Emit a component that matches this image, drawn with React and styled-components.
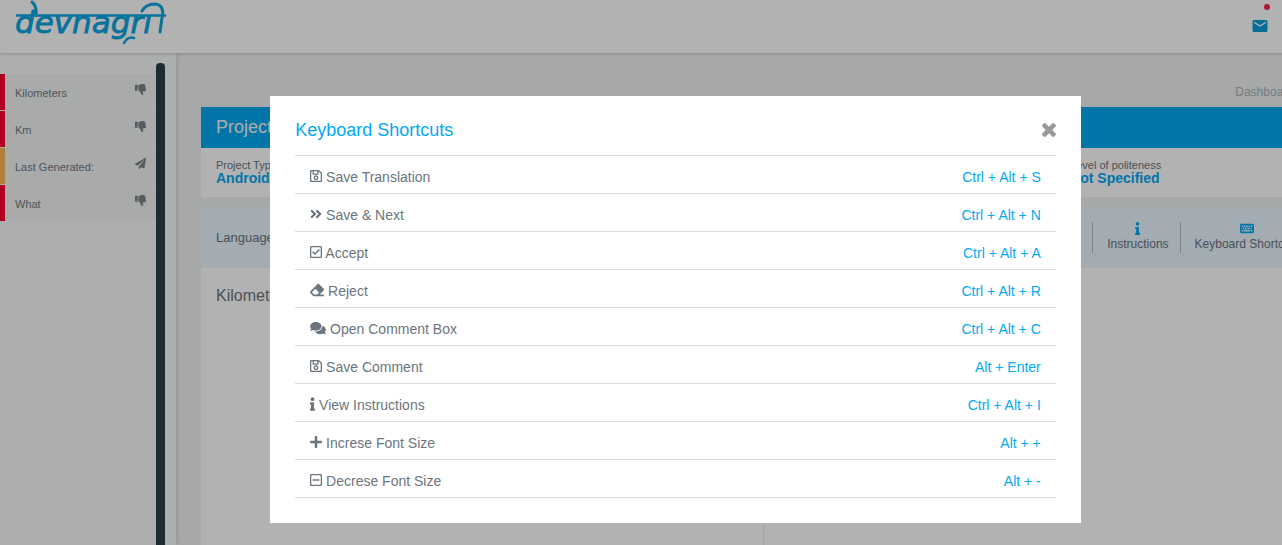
import React from "react";
import styled, { createGlobalStyle } from "styled-components";
import {
  FaRegSave,
  FaAngleDoubleRight,
  FaRegCheckSquare,
  FaEraser,
  FaComments,
  FaInfo,
  FaPlus,
  FaRegMinusSquare,
  FaThumbsDown,
  FaPaperPlane,
  FaKeyboard,
} from "react-icons/fa";
import { MdEmail } from "react-icons/md";

const blue = "#03a9f3";
const grey = "#6c757d";

const GlobalStyle = createGlobalStyle`
  * { box-sizing: border-box; }
  body {
    margin: 0;
    overflow: hidden;
    background: #f0f3f2;
    color: ${grey};
    font-family: "Liberation Sans", Arial, sans-serif;
    font-size: 14px;
  }
`;

const Page = styled.div`
  position: relative;
  display: flex;
  flex-direction: column;
  width: calc(100% + 69px);
  height: 100vh;
  overflow: hidden;
`;

const TopBar = styled.header`
  position: relative;
  z-index: 1;
  display: flex;
  flex: none;
  justify-content: space-between;
  align-items: flex-start;
  height: 53px;
  padding: 0 82px 0 15px;
  background: #fff;
  box-shadow: 0 1px 4px rgba(0, 0, 0, 0.2);
`;

const LogoLink = styled.a`
  display: block;
  height: 48px;
`;

const MailButton = styled.button`
  position: relative;
  margin: 17px 0 0;
  padding: 0;
  border: 0;
  background: none;
  color: #0aa0d8;
  font-size: 18px;
  line-height: 1;
  svg { display: block; }
`;

const Dot = styled.span`
  position: absolute;
  top: -13px;
  right: -1px;
  width: 6px;
  height: 6px;
  border-radius: 50%;
  background: #ff1f4f;
`;

const Body = styled.div`
  display: flex;
  flex: 1;
  min-height: 0;
`;

const Sidebar = styled.aside`
  display: flex;
  flex: none;
  width: 176px;
  padding-top: 10px;
  background: #f8fbfa;
  box-shadow: 1px 0 4px rgba(0, 0, 0, 0.12);
`;

const Strings = styled.ul`
  display: flex;
  flex: 1;
  flex-direction: column;
  gap: 1px;
  margin: 11px 0 0;
  padding: 0;
  list-style: none;
`;

const StringItem = styled.li`
  display: flex;
  justify-content: space-between;
  height: 36px;
  padding: 10px 10px 0;
  border-left: 5px solid ${(p) => p.$tone};
  background: #f2f4f4;
  font-size: 11px;
  line-height: 18px;
  svg { color: #7a8188; }
`;

const StringLabel = styled.span`
  color: #717a80;
`;

const ScrollThumb = styled.div`
  width: 9px;
  margin-right: 11px;
  border-radius: 4px 4px 0 0;
  background: #2a3f4a;
`;

const Main = styled.main`
  display: flex;
  flex: 1;
  flex-direction: column;
  min-width: 0;
  padding: 0 25px;
`;

const Breadcrumb = styled.nav`
  display: flex;
  justify-content: flex-end;
  padding: 31px 32px 6px 0;
  font-size: 12px;
  line-height: 17px;
  a { color: #a6b0b8; text-decoration: none; }
`;

const Banner = styled.h1`
  margin: 0;
  padding: 0 15px;
  background: ${blue};
  color: #f4f8fa;
  font-size: 18px;
  font-weight: 400;
  line-height: 41px;
`;

const Details = styled.dl`
  display: grid;
  grid-template-columns: 78% 1fr;
  margin: 0 0 10px;
  padding: 10px 15px 9px;
  background: #fff;
`;

const DetailLabel = styled.dt`
  font-size: 11px;
  line-height: 14px;
`;

const DetailValue = styled.dd`
  margin: 0;
  padding-bottom: 4px;
  color: ${blue};
  font-size: 14px;
  font-weight: 700;
  line-height: 12px;
`;

const Toolbar = styled.div`
  display: flex;
  justify-content: space-between;
  align-items: center;
  height: 61px;
  padding: 0 15px;
  background: #e9f6ff;
  font-size: 13px;
  line-height: 16px;
`;

const Tools = styled.div`
  display: flex;
`;

const Tool = styled.button`
  display: flex;
  flex-direction: column;
  align-items: center;
  padding: 0 11px 0 14px;
  border: 0;
  border-left: 1px solid #b4bcc0;
  background: none;
  color: ${grey};
  font-family: inherit;
  font-size: 12px;
  line-height: 18px;
  svg { color: ${blue}; }
`;

const Editor = styled.section`
  display: grid;
  grid-template-columns: 1fr 1fr;
  flex: 1;
  background: #fff;
`;

const Pane = styled.div`
  padding: 18px 15px;
  border-right: 1px solid #e6e9ea;
  font-size: 16px;
  line-height: 20px;
`;

const Overlay = styled.div`
  position: absolute;
  z-index: 2;
  inset: 0;
  padding-top: 96px;
  background: rgba(0, 0, 0, 0.3);
`;

const Modal = styled.section`
  width: 60%;
  margin: 0 auto;
  padding: 25px;
  background: #fff;
`;

const ModalHeader = styled.div`
  display: flex;
  justify-content: space-between;
  align-items: flex-start;
  height: 35px;
  border-bottom: 1px solid #d9dcde;
`;

const ModalTitle = styled.h2`
  margin: 0;
  color: ${blue};
  font-size: 18px;
  font-weight: 400;
  line-height: 18px;
`;

const CloseButton = styled.button`
  margin: 0;
  padding: 2px 0;
  border: 0;
  background: none;
  color: #999;
  svg { display: block; }
`;

const Glyph = styled.span`
  svg {
    display: ${(p) => (p.$inline ? "inline" : "block")};
    width: ${(p) => p.$width}px;
    height: ${(p) => p.$height}px;
    vertical-align: -1px;
  }
`;

const Shortcuts = styled.table`
  width: 100%;
  border-spacing: 0;
`;

const Cell = styled.td`
  height: 38px;
  padding: 11px 15px 5px;
  border-bottom: 1px solid #d9dcde;
  color: ${(p) => (p.$keys ? blue : grey)};
  text-align: ${(p) => (p.$keys ? "right" : "left")};
  line-height: 21px;
`;

const shortcuts = [
  [FaRegSave, 12, "Save Translation", "Ctrl + Alt + S"],
  [FaAngleDoubleRight, 12, "Save & Next", "Ctrl + Alt + N"],
  [FaRegCheckSquare, 12, "Accept", "Ctrl + Alt + A"],
  [FaEraser, 14, "Reject", "Ctrl + Alt + R"],
  [FaComments, 16, "Open Comment Box", "Ctrl + Alt + C"],
  [FaRegSave, 12, "Save Comment", "Alt + Enter"],
  [FaInfo, 5, "View Instructions", "Ctrl + Alt + I"],
  [FaPlus, 12, "Increse Font Size", "Alt + +"],
  [FaRegMinusSquare, 12, "Decrese Font Size", "Alt + -"],
];

const red = "#f80030";
const amber = "#fcbb52";

const strings = [
  ["Kilometers", red, FaThumbsDown],
  ["Km", red, FaThumbsDown],
  ["Last Generated:", amber, FaPaperPlane],
  ["What", red, FaThumbsDown],
];

function CloseIcon() {
  return (
    <svg width="14" height="14" viewBox="302 366 1188 1188" fill="currentColor" aria-hidden="true">
      <path d="M1490 1322q0 40-28 68l-136 136q-28 28-68 28t-68-28l-294-294-294 294q-28 28-68 28t-68-28l-136-136q-28-28-28-68t28-68l294-294-294-294q-28-28-28-68t28-68l136-136q28-28 68-28t68 28l294 294 294-294q28-28 68-28t68 28l136 136q28 28 28 68t-28 68l-294 294 294 294q28 28 28 68z" />
    </svg>
  );
}

function Logo() {
  return (
    <svg width="154" height="48" viewBox="0 0 154 48" fill="none" stroke="#09a5df" strokeLinecap="round">
      <text
        x="0"
        y="33"
        fill="#09a5df"
        strokeWidth="0.8"
        fontFamily="DejaVu Sans, sans-serif"
        fontStyle="italic"
        fontSize="31"
      >
        devnagrı
      </text>
      <path d="M2 15.5H150" strokeWidth="2.5" />
      <path d="M17 2q5 4 4 13" strokeWidth="3" />
      <path d="M127 11q4-7 13-7q10 1 7 14l-2 14" strokeWidth="3" />
      <path d="M119 38q-6-2-10 5" strokeWidth="2.5" />
    </svg>
  );
}

export default function App() {
  return (
    <>
      <GlobalStyle />
      <Page>
        <TopBar>
          <LogoLink href="#" aria-label="devnagri">
            <Logo />
          </LogoLink>
          <MailButton type="button" aria-label="Messages">
            <MdEmail />
            <Dot />
          </MailButton>
        </TopBar>
        <Body>
          <Sidebar>
            <Strings>
              {strings.map(([label, tone, Icon]) => (
                <StringItem key={label} $tone={tone}>
                  <StringLabel>{label}</StringLabel>
                  <Glyph $width={11} $height={11}>
                    <Icon />
                  </Glyph>
                </StringItem>
              ))}
            </Strings>
            <ScrollThumb />
          </Sidebar>
          <Main>
            <Breadcrumb>
              <a href="#">Dashboard</a>
            </Breadcrumb>
            <Banner>Project</Banner>
            <Details>
              <div>
                <DetailLabel>Project Type</DetailLabel>
                <DetailValue>Android</DetailValue>
              </div>
              <div>
                <DetailLabel>Level of politeness</DetailLabel>
                <DetailValue>Not Specified</DetailValue>
              </div>
            </Details>
            <Toolbar>
              <span>Language</span>
              <Tools>
                <Tool type="button">
                  <Glyph $width={5} $height={13}>
                    <FaInfo />
                  </Glyph>
                  Instructions
                </Tool>
                <Tool type="button">
                  <Glyph $width={14} $height={13}>
                    <FaKeyboard />
                  </Glyph>
                  Keyboard Shortcuts
                </Tool>
              </Tools>
            </Toolbar>
            <Editor>
              <Pane>Kilometers</Pane>
            </Editor>
          </Main>
        </Body>
        <Overlay>
          <Modal role="dialog" aria-labelledby="shortcuts-title">
            <ModalHeader>
              <ModalTitle id="shortcuts-title">Keyboard Shortcuts</ModalTitle>
              <CloseButton type="button" aria-label="Close">
                <CloseIcon />
              </CloseButton>
            </ModalHeader>
            <Shortcuts>
              <tbody>
                {shortcuts.map(([Icon, width, label, keys]) => (
                  <tr key={label}>
                    <Cell>
                      <Glyph $inline $width={width} $height={14}>
                        <Icon />
                      </Glyph>{" "}
                      {label}
                    </Cell>
                    <Cell $keys>{keys}</Cell>
                  </tr>
                ))}
              </tbody>
            </Shortcuts>
          </Modal>
        </Overlay>
      </Page>
    </>
  );
}
